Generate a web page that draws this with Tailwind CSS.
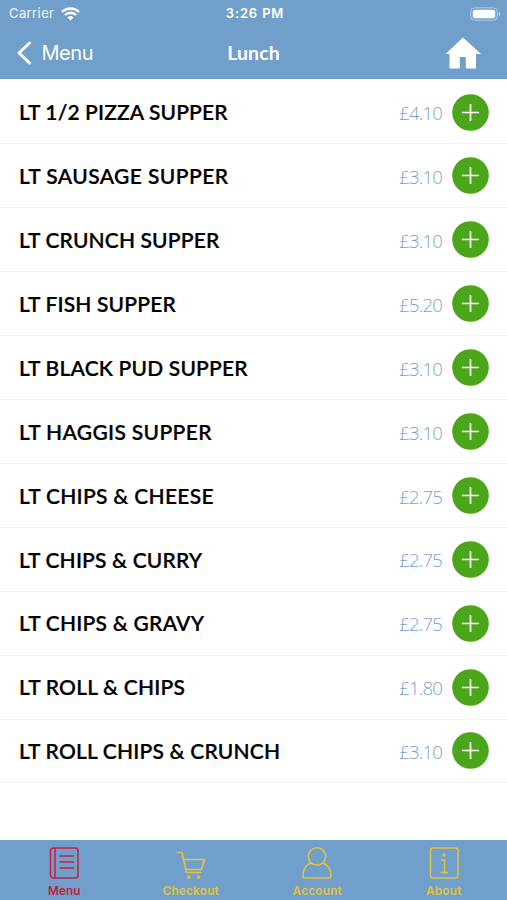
<!DOCTYPE html>
<html lang="en">
<head>
<meta charset="utf-8">
<title>Lunch</title>
<script src="https://cdn.jsdelivr.net/npm/@tailwindcss/browser@4"></script>
</head>
<body class="bg-white">
<div class="flex h-[900px] w-[507px] flex-col overflow-hidden bg-white font-['Inter','Liberation_Sans',sans-serif]">
  <header class="h-[79px] shrink-0 bg-[#709fcc] text-white">
    <div class="grid h-[27px] grid-cols-3 items-center pr-[6px] pl-[9px] text-[13px]">
      <div class="flex items-center gap-[7px] text-white/90"><span class="pt-px tracking-[0.4px]">Carrier</span>
        <svg class="h-[14px] w-[19px]" viewBox="0 0 19 14" fill="none" stroke="#fff" stroke-width="2.4"><path d="M1 4.9a12.2 12.2 0 0 1 17 0M4 8a8 8 0 0 1 11 0"/><path d="M6.5 10.4a4.4 4.4 0 0 1 6 0l-3 3z" fill="#fff" stroke="none"/></svg>
      </div>
      <div class="pt-px text-center font-semibold tracking-[0.85px]">3:26 PM</div>
      <svg class="h-[14px] w-[31px] justify-self-end" viewBox="0 0 31 14"><rect x=".8" y=".8" width="26.4" height="12.4" rx="3.6" fill="none" stroke="#fff" stroke-opacity=".45"/><rect x="2.8" y="2.7" width="22.4" height="8.6" rx="2" fill="#fff"/><path d="M28.6 5v4q2-.7 2-2t-2-2" fill="#fff" fill-opacity=".5"/></svg>
    </div>
    <div class="grid h-[52px] grid-cols-[1fr_auto_1fr] items-center pr-[26px] pl-[17px]">
      <div class="flex items-center gap-[9.500px]">
        <svg class="h-6 w-[15px]" viewBox="0 0 15 24" fill="none" stroke="#fff" stroke-width="3" stroke-linecap="round" stroke-linejoin="round"><path d="M12.5 2 2 12l10.500 10"/></svg>
        <span class="text-[20px] tracking-[-0.45px]">Menu</span>
      </div>
      <h1 class="translate-x-[4.500px] text-center font-[Lato] text-[19.500px] font-bold tracking-[0.1px]">Lunch</h1>
      <svg class="h-8 w-9 justify-self-end" viewBox="0 0 36 32" fill="#fff"><path d="M18 .5 36 17h-5v14.500H20.800V20h-6v11.500H4.500V17H.5z"/></svg>
    </div>
  </header>
  <main class="flex-1 pt-[1.600px]">
    <ul id="items"></ul>
  </main>
  <nav class="grid h-[60px] shrink-0 grid-cols-4 bg-[#709fcc] pl-px text-[11.800px] font-semibold tracking-[0.2px] text-[#e1c43c]">
    <div class="flex flex-col items-center gap-[4px] pt-[7px] text-[#c5203c]">
      <svg class="h-8 w-8" viewBox="0 0 32 32" fill="none" stroke="currentColor" stroke-width="1.500"><rect x="2.500" y="1" width="27.500" height="30" rx="3"/><path d="M7 1v30M11.500 9h14.500M11.500 15h14.500M11.500 21h14.500"/></svg>
      <span class="leading-[16px] tracking-normal">Menu</span>
    </div>
    <div class="flex flex-col items-center gap-[4px] pt-[7px]">
      <svg class="h-8 w-8" viewBox="0 0 32 32" fill="none" stroke="currentColor" stroke-width="1.700" stroke-linecap="round" stroke-linejoin="round"><path d="M2.500 5.500H7l4.500 20H26M8.700 12.500H29.500L26.500 22.500H11"/><circle cx="14" cy="30" r="1"/><circle cx="23.500" cy="30" r="1"/></svg>
      <span class="leading-[16px]">Checkout</span>
    </div>
    <div class="flex flex-col items-center gap-[4px] pt-[7px]">
      <svg class="h-8 w-8" viewBox="0 0 32 32" fill="none" stroke="currentColor" stroke-width="1.600"><circle cx="16" cy="9.500" r="8.700"/><path d="M10.200 15.800C4.500 18 2 22.500 2 29q0 2 2 2h24q2 0 2-2c0-6.500-2.500-11-8.200-13.200"/></svg>
      <span class="leading-[16px]">Account</span>
    </div>
    <div class="flex flex-col items-center gap-[4px] pt-[7px]">
      <svg class="h-8 w-8" viewBox="0 0 32 32" fill="none" stroke="currentColor" stroke-width="1.500"><rect x="2.500" y="1" width="27.500" height="30" rx="2.500"/><path d="M13 13h3.500v12.500M12.500 25.500h7.500"/><circle cx="16" cy="8" r="1"/></svg>
      <span class="leading-[16px]">About</span>
    </div>
  </nav>
</div>
<script>
const items = [
  ['LT 1/2 PIZZA SUPPER', '4.10', 208.500], ['LT SAUSAGE SUPPER', '3.10', 208.500],
  ['LT CRUNCH SUPPER', '3.10', 199.500], ['LT FISH SUPPER', '5.20', 156],
  ['LT BLACK PUD SUPPER', '3.10', 228], ['LT HAGGIS SUPPER', '3.10', 192],
  ['LT CHIPS & CHEESE', '2.75', 194], ['LT CHIPS & CURRY', '2.75', 182.500],
  ['LT CHIPS & GRAVY', '2.75', 184.500], ['LT ROLL & CHIPS', '1.80', 166],
  ['LT ROLL CHIPS & CRUNCH', '3.10', 261]
];
const list = document.getElementById('items');
const ctx = document.createElement('canvas').getContext('2d');
ctx.font = '600 21px Lato';
for (const [name, price, width] of items) {
  const li = document.createElement('li');
  li.className = "flex h-[63.9px] items-center border-b border-[#f3f3f3] pr-[18px] pl-[19px]";
  li.innerHTML = `<span class="name font-[Lato] text-[21px] font-semibold whitespace-nowrap text-black [-webkit-text-stroke:0.2px_black]"></span>
    <span class="ml-auto mr-[10px] pt-[2px] font-['Open_Sans'] text-[18.500px] font-light tracking-[-0.8px] text-[#73a4d2]">£${price}</span>
    <svg class="size-[37px]" viewBox="0 0 37 37"><circle cx="18.500" cy="18.500" r="18.300" fill="#4ba61b"/><path d="M18.500 10v17M10 18.500h17" stroke="#fff" stroke-width="1.700"/></svg>`;
  const label = li.querySelector('.name');
  label.textContent = name;
  label.style.letterSpacing = (width + 1.5 - ctx.measureText(name).width) / name.length + 'px';
  list.append(li);
}
</script>
</body>
</html>
